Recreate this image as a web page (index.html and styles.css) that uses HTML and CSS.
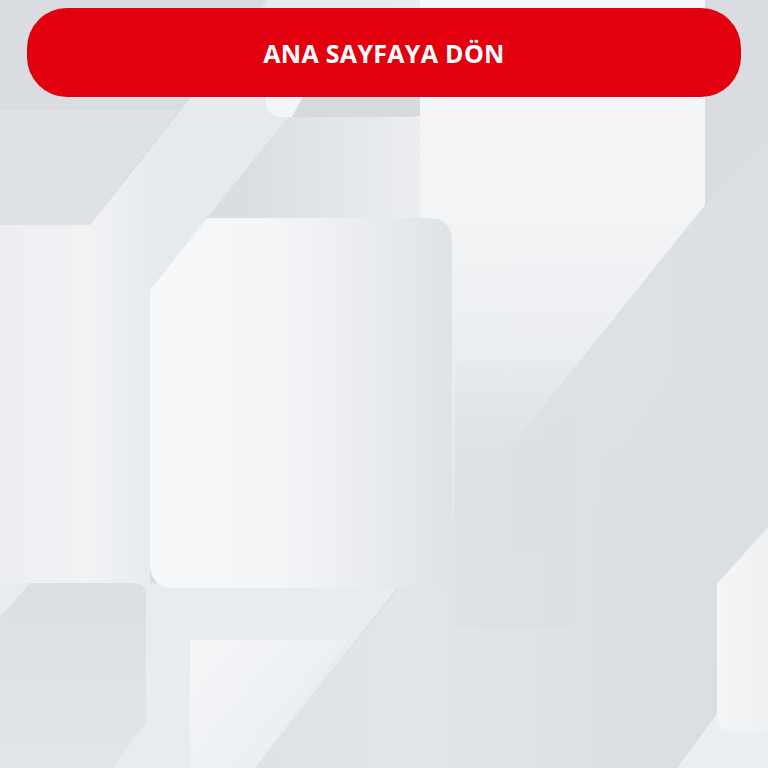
FILE: index.html
```html
<!DOCTYPE html>
<html lang="tr">
<head>
<meta charset="utf-8">
<title>Ana Sayfa</title>
<link rel="stylesheet" href="styles.css">
</head>
<body>
<div class="page">
  <svg class="backdrop" viewBox="0 0 768 768" width="768" height="768" aria-hidden="true">
    <defs>
      <linearGradient id="gBand" gradientUnits="userSpaceOnUse" x1="0" y1="0" x2="160" y2="0">
        <stop offset="0" stop-color="#eceef1"/>
        <stop offset="0.55" stop-color="#f0f2f4"/>
        <stop offset="1" stop-color="#e7eaed"/>
      </linearGradient>
      <linearGradient id="gMid" gradientUnits="userSpaceOnUse" x1="250" y1="0" x2="445" y2="0">
        <stop offset="0" stop-color="#dbdee1"/>
        <stop offset="1" stop-color="#eef0f2"/>
      </linearGradient>
      <linearGradient id="gPanel" gradientUnits="userSpaceOnUse" x1="0" y1="0" x2="0" y2="540">
        <stop offset="0" stop-color="#f5f6f8"/>
        <stop offset="0.4" stop-color="#f2f4f6"/>
        <stop offset="1" stop-color="#e2e5e8"/>
      </linearGradient>
      <linearGradient id="gBig" gradientUnits="userSpaceOnUse" x1="150" y1="0" x2="452" y2="0">
        <stop offset="0" stop-color="#f7f8fa"/>
        <stop offset="0.4" stop-color="#f3f5f7"/>
        <stop offset="0.65" stop-color="#eceef1"/>
        <stop offset="0.85" stop-color="#e5e8eb"/>
        <stop offset="1" stop-color="#e0e3e6"/>
      </linearGradient>
      <linearGradient id="gLowDark" gradientUnits="userSpaceOnUse" x1="0" y1="583" x2="0" y2="768">
        <stop offset="0" stop-color="#dcdfe2"/>
        <stop offset="1" stop-color="#e3e6e9"/>
      </linearGradient>
      <linearGradient id="gLowLight" gradientUnits="userSpaceOnUse" x1="190" y1="640" x2="340" y2="768">
        <stop offset="0" stop-color="#f4f6f8"/>
        <stop offset="1" stop-color="#e8ebee"/>
      </linearGradient>
      <linearGradient id="gRight" gradientUnits="userSpaceOnUse" x1="717" y1="0" x2="768" y2="0">
        <stop offset="0" stop-color="#f3f5f7"/>
        <stop offset="1" stop-color="#eef0f2"/>
      </linearGradient>
      <linearGradient id="gLowerRight" gradientUnits="userSpaceOnUse" x1="255" y1="0" x2="768" y2="0">
        <stop offset="0" stop-color="#dfe2e5"/>
        <stop offset="0.3" stop-color="#e3e6e9"/>
        <stop offset="0.6" stop-color="#dfe2e5"/>
        <stop offset="1" stop-color="#dcdfe2"/>
      </linearGradient>
      <linearGradient id="gInner" gradientUnits="userSpaceOnUse" x1="0" y1="360" x2="0" y2="628">
        <stop offset="0" stop-color="#dcdfe2" stop-opacity="0.2"/>
        <stop offset="0.35" stop-color="#dcdfe2" stop-opacity="0.7"/>
        <stop offset="1" stop-color="#dcdfe2" stop-opacity="0.6"/>
      </linearGradient>
      <linearGradient id="gColumn" gradientUnits="userSpaceOnUse" x1="0" y1="370" x2="0" y2="768">
        <stop offset="0" stop-color="#dadde0" stop-opacity="0"/>
        <stop offset="0.5" stop-color="#dadde0" stop-opacity="0.45"/>
        <stop offset="1" stop-color="#dadde0" stop-opacity="0.6"/>
      </linearGradient>
    </defs>
    <rect width="768" height="768" fill="#d9dce0"/>
    <path d="M768,137 L768,768 L255,768 L705,205 Z" fill="url(#gLowerRight)"/>
    <path d="M268,0 L383,0 L207,218 L150,290 L150,600 L0,600 L0,225 L90,225 Z" fill="url(#gBand)"/>
    <path d="M0,110 L178,110 L90,225 L0,225 Z" fill="#dfe2e5"/>
    <path d="M383,0 L445,0 L445,218 L207,218 Z" fill="url(#gMid)"/>
    <path d="M300,90 L440,90 L428,108 Q422,117 410,117 L292,117 Z" fill="#d7dadd"/>
    <path d="M266,90 L306,90 L292,117 L284,117 Q266,117 266,102 Z" fill="#f4f5f7"/>
    <path d="M420,0 L705,0 L705,205 L420,560 Z" fill="url(#gPanel)"/>
    <rect x="455" y="360" width="122" height="268" rx="10" fill="url(#gInner)"/>
    <rect x="593" y="370" width="124" height="398" fill="url(#gColumn)"/>
    <path d="M768,650 L768,768 L677,768 L717,714 Z" fill="#eceff1"/>
    <path d="M768,527 L717,584 L717,714 Q717,731 734,731 L768,731 Z" fill="url(#gRight)"/>
    <path d="M0,583 L401,583 L255,768 L0,768 Z" fill="#e9ecee"/>
    <path d="M30,583 L133,583 Q146,583 146,596 L146,722 L113,768 L0,768 L0,617 Z" fill="url(#gLowDark)"/>
    <path d="M190,640 L348,640 L255,768 L190,768 Z" fill="url(#gLowLight)"/>
    <path d="M207,218 L428,218 Q452,218 452,242 L452,588 L175,588 Q150,588 150,563 L150,290 Z" fill="url(#gBig)"/>
  </svg>
  <div class="content">
    <a class="home-button" href="#">ANA SAYFAYA DÖN</a>
  </div>
</div>
</body>
</html>
```
FILE: styles.css
```css
html, body {
  margin: 0;
  padding: 0;
}

body {
  width: 768px;
  height: 768px;
  overflow: hidden;
  font-family: "Open Sans", "Liberation Sans", sans-serif;
}

.page {
  display: grid;
  width: 768px;
  height: 768px;
}

.backdrop,
.content {
  grid-area: 1 / 1;
}

.backdrop {
  display: block;
}

.content {
  padding: 8px 27px 0 27px;
  align-self: start;
}

.home-button {
  display: flex;
  align-items: center;
  justify-content: center;
  height: 89px;
  border-radius: 40px;
  background: #e2000f;
  color: #ffffff;
  text-decoration: none;
  font-weight: 700;
  font-size: 25px;
  letter-spacing: 0.3px;
}
```
